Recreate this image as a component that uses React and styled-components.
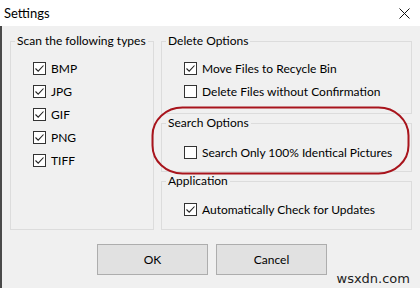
import React from "react";
import styled, { createGlobalStyle } from "styled-components";

const GlobalStyle = createGlobalStyle`
  html, body {
    margin: 0;
    padding: 0;
    background: #f0f0f0;
  }
  body {
    font-family: Lato, "Noto Sans", sans-serif;
    font-size: 12px;
    color: #000;
  }
`;

const CheckIcon = () => (
  <svg width="11" height="11" viewBox="0 0 11 11">
    <polyline points="1.5,5.5 4.2,8.2 9.5,2.5" fill="none" stroke="#222" strokeWidth="1.1" />
  </svg>
);

const Check = ({ checked, label }) => (
  <Row>
    <Box>{checked && <CheckIcon />}</Box>
    <span>{label}</span>
  </Row>
);

const App = () => {
  const types = ["BMP", "JPG", "GIF", "PNG", "TIFF"];
  return (
    <>
      <GlobalStyle />
      <Window>
        <TitleBar>
          <Title>Settings</Title>
          <svg width="11" height="11" viewBox="0 0 11 11">
            <path d="M0.5 0.5 L10.5 10.5 M10.5 0.5 L0.5 10.5" stroke="#111" strokeWidth="1" />
          </svg>
        </TitleBar>
        <Body>
          <Columns>
            <Group $width={144} $height={197}>
              <Legend>Scan the following types</Legend>
              <List $top={11}>
                {types.map((t) => (
                  <Check key={t} checked label={t} />
                ))}
              </List>
            </Group>
            <RightColumn>
              <Group $height={81}>
                <Legend>Delete Options</Legend>
                <List $top={11}>
                  <Check checked label="Move Files to Recycle Bin" />
                  <Check label="Delete Files without Confirmation" />
                </List>
              </Group>
              <Group $height={57}>
                <Legend>Search Options</Legend>
                <List $top={13}>
                  <Check label="Search Only 100% Identical Pictures" />
                </List>
              </Group>
              <Group $height={57}>
                <Legend>Application</Legend>
                <List $top={12}>
                  <Check checked label="Automatically Check for Updates" />
                </List>
              </Group>
            </RightColumn>
          </Columns>
          <Buttons>
            <Button>OK</Button>
            <Button>Cancel</Button>
          </Buttons>
          <Highlight width="260" height="70" viewBox="0 0 260 70">
            <rect x="1.5" y="1.5" width="256" height="66" rx="30" ry="28" fill="none" stroke="#a8141c" strokeWidth="2" />
          </Highlight>
          <Watermark>wsxdn.com</Watermark>
        </Body>
      </Window>
    </>
  );
};

export default App;

const Window = styled.div`
  width: 420px;
  height: 288px;
  display: flex;
  flex-direction: column;
  overflow: hidden;
`;
const TitleBar = styled.div`
  height: 26px;
  background: #fff;
  display: flex;
  align-items: center;
  justify-content: space-between;
  padding: 0 10px 0 4px;
  box-sizing: border-box;
`;
const Title = styled.div`
  font-size: 13px;
`;
const Body = styled.div`
  position: relative;
  flex: 1;
  background: #f0f0f0;
  border-left: 2px solid #4a4a4a;
  padding: 7px 0 0 8px;
`;
const Columns = styled.div`
  display: flex;
  gap: 7px;
`;
const RightColumn = styled.div`
  display: flex;
  flex-direction: column;
  gap: 1px;
  width: 251px;
`;
const Group = styled.fieldset`
  margin: 0;
  padding: 0 4px;
  border: 1px solid #dcdcdc;
  box-sizing: border-box;
  width: ${(p) => (p.$width ? `${p.$width}px` : "100%")};
  height: ${(p) => p.$height}px;
`;
const Legend = styled.legend`
  padding: 0 2px;
  line-height: 16px;
  white-space: nowrap;
`;
const List = styled.div`
  display: flex;
  flex-direction: column;
  gap: 7px;
  margin: ${(p) => p.$top}px 0 0 18px;
`;
const Row = styled.div`
  display: flex;
  align-items: center;
  gap: 5px;
  height: 16px;
  white-space: nowrap;
`;
const Box = styled.div`
  width: 13px;
  height: 13px;
  box-sizing: border-box;
  border: 1px solid #333;
  background: #fff;
  display: flex;
  align-items: center;
  justify-content: center;
`;
const Buttons = styled.div`
  display: flex;
  justify-content: center;
  gap: 8px;
  margin-top: 14px;
  padding-right: 6px;
`;
const Button = styled.button`
  width: 111px;
  height: 31px;
  background: #e1e1e1;
  border: 1px solid #adadad;
  font-family: Lato, "Noto Sans", sans-serif;
  font-size: 12px;
  color: #000;
  padding: 0;
`;
const Highlight = styled.svg`
  position: absolute;
  left: 149px;
  top: 80px;
`;
const Watermark = styled.div`
  position: absolute;
  right: 10px;
  bottom: 2px;
  font-family: "DejaVu Sans", sans-serif;
  font-size: 13px;
  color: #222;
`;
